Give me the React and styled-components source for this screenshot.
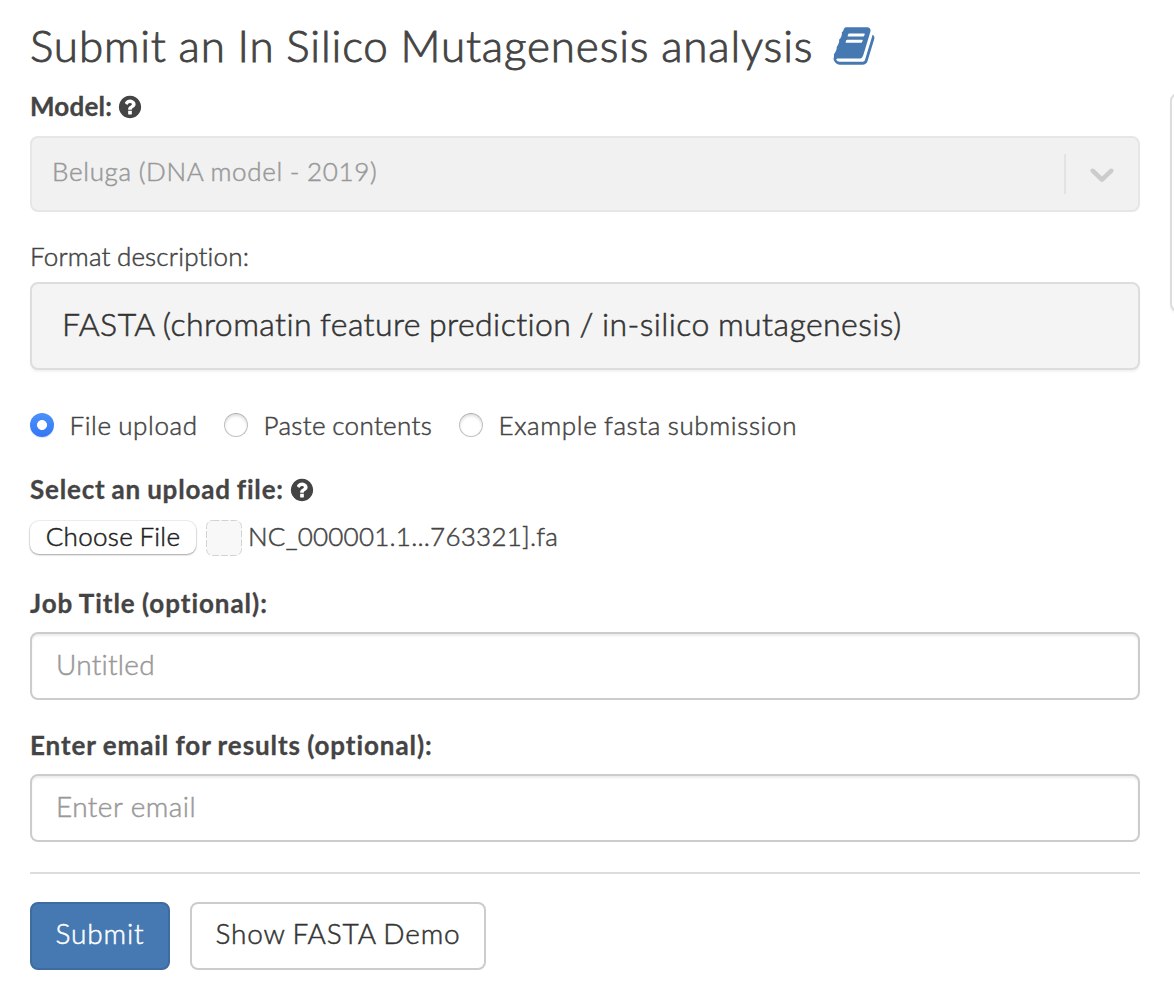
import React, { useState } from "react";
import styled, { createGlobalStyle, css } from "styled-components";

const GlobalStyle = createGlobalStyle`
  * { box-sizing: border-box; }
  body {
    margin: 0;
    background: #fff;
    color: #444;
    font-family: Lato, "Open Sans", sans-serif;
    font-weight: 300;
    font-size: 26px;
    line-height: 37px;
    overflow: hidden;
  }
`;

const Page = styled.main`
  display: flex;
  align-items: flex-start;
  gap: 30px;
  width: 1174px;
  height: 1004px;
  padding: 19px 0 0 30px;
  overflow: hidden;
`;

const Form = styled.form`
  display: flex;
  flex-direction: column;
  flex: 0 0 1110px;
`;

const SidePanel = styled.aside`
  flex: 0 0 300px;
  height: 219px;
  margin-top: 74px;
  border: 2px solid #ddd;
  border-radius: 8px;
  box-shadow: 0 2px 2px rgba(0, 0, 0, 0.05);
`;

const Text = styled.span`
  letter-spacing: ${(p) => p.$spacing || 0}px;
  word-spacing: -1px;
  -webkit-text-stroke: ${(p) => (p.$stroke === undefined ? 0.5 : p.$stroke)}px currentColor;
  white-space: nowrap;
`;

const Heading = styled.h1`
  display: flex;
  align-items: center;
  gap: 13px;
  height: 54px;
  margin: 0 0 15px;
  font-size: 44px;
  font-weight: 300;
  line-height: 52px;
  ${Text} {
    margin-bottom: 2px;
  }
`;

const BookSvg = styled.svg`
  width: 44px;
  height: 44px;
  margin-left: 6px;
  fill: #4679b2;
`;

const Label = styled.label`
  display: flex;
  align-items: center;
  height: 37px;
  gap: 7px;
  margin: ${(p) => p.$top || 0}px 0 ${(p) => p.$bottom}px;
  font-weight: ${(p) => (p.$plain ? 300 : 700)};
`;

const HelpSvg = styled.svg`
  width: 26px;
  height: 26px;
  margin-left: -2px;
  fill: #444;
`;

const Select = styled.div`
  display: flex;
  align-items: center;
  height: 76px;
  padding: 0 0 6px 20px;
  border: 2px solid #e6e6e6;
  border-radius: 8px;
  background: #f1f1f1;
  color: #999;
`;

const SelectValue = styled.div`
  flex: 1;
`;

const Separator = styled.span`
  width: 2px;
  height: 40px;
  margin-top: 6px;
  background: #e3e3e3;
`;

const Chevron = styled.svg`
  width: 40px;
  height: 40px;
  margin: 5px 16px 0;
  fill: #ccc;
`;

const FormatBox = styled.section`
  display: flex;
  align-items: center;
  height: 88px;
  padding: 0 30px 6px;
  border: 2px solid #ddd;
  border-radius: 8px;
  background: #f4f4f4;
  box-shadow: 0 2px 2px rgba(0, 0, 0, 0.05);
  color: #333;
  font-size: 32px;
`;

const RadioRow = styled.div`
  display: flex;
  height: 37px;
  margin-top: 37px;
`;

const RadioLabel = styled.label`
  display: flex;
  align-items: center;
  width: ${(p) => p.$width}px;
  gap: 15.5px;
`;

const Radio = styled.input`
  appearance: none;
  flex: none;
  width: 24px;
  height: 24px;
  margin: 0 0 1px;
  border-radius: 50%;
  border: 1px solid #c0c0c0;
  border-top-color: #adadad;
  background: #fff;
  box-shadow: inset 0 2px 3px rgba(0, 0, 0, 0.13);
  &:checked {
    border: 0;
    background: radial-gradient(circle, #fff 0 4.6px, transparent 5.3px),
      linear-gradient(#4c92f8, #3377f6);
    box-shadow: 0 1px 1px rgba(50, 110, 220, 0.18);
  }
`;

const FileRow = styled.div`
  display: flex;
  align-items: center;
  height: 37px;
`;

const ChooseButton = styled.button`
  display: flex;
  align-items: center;
  justify-content: center;
  width: 166px;
  height: 33px;
  margin-top: 2px;
  padding: 0 0 2px;
  border: 0;
  border-radius: 9px;
  background: #fff;
  box-shadow: 0 0 0 1px rgba(0, 0, 0, 0.06), 0 1px 2px rgba(0, 0, 0, 0.32);
  color: #222;
  font: inherit;
  line-height: 31px;
`;

const FileThumb = styled.svg`
  width: 36px;
  height: 36px;
  margin: 3px 6px 0 10px;
  fill: #f8f8f8;
  stroke: #d2d2d2;
`;

const TextInput = styled.input`
  height: 68px;
  padding: 0 24px 5px;
  border: 2px solid #ccc;
  border-radius: 8px;
  background: #fff;
  box-shadow: inset 0 2px 2px rgba(0, 0, 0, 0.075);
  color: #444;
  font: inherit;
  font-size: 28px;
  letter-spacing: ${(p) => p.$spacing}px;
  outline: none;
  &::placeholder {
    color: #999;
    opacity: 1;
    -webkit-text-stroke: 0.5px #999;
  }
`;

const Divider = styled.hr`
  width: 100%;
  height: 2px;
  margin: 30px 0 28px;
  border: 0;
  background: #ddd;
`;

const Actions = styled.div`
  display: flex;
  gap: 20px;
`;

const Button = styled.button`
  width: ${(p) => p.$width}px;
  height: 68px;
  padding: 0 0 6px;
  border: 2px solid #ccc;
  border-radius: 8px;
  background: #fff;
  color: #333;
  font: inherit;
  font-size: 28px;
  ${(p) =>
    p.$primary &&
    css`
      border-color: #3f6ca0;
      background: #4679b2;
      color: #fff;
    `}
`;

const BookIcon = () => (
  <BookSvg viewBox="0 0 1792 1792">
    <path d="M1703 478q40 57 18 129l-275 906q-19 64-76.5 107.5t-122.5 43.5h-923q-77 0-148.5-53.5t-99.5-131.5q-24-67-2-127 0-4 3-27t4-37q1-8-3-21.5t-3-19.5q2-11 8-21t16.5-23.5 16.5-23.5q23-38 45-91.5t30-91.5q3-10 .5-30t-.5-28q3-11 17-28t17-23q21-36 42-92t25-90q1-9-2.5-32t.5-28q4-13 22-30.5t22-22.5q19-26 42.5-84.5t27.5-96.5q1-8-3-25.5t-2-26.5q2-8 9-18t18-23 17-21q8-12 16.5-30.5t15-35 16-36 19.5-32 26.5-23.5 36-11.5 47.5 5.5l-1 3q38-9 51-9h761q74 0 114 56t18 130l-274 906q-36 119-71.5 153.5t-128.5 34.5h-869q-27 0-38 15-11 16-1 43 24 70 144 70h923q29 0 56-15.5t35-41.5l300-987q7-22 5-57 38 15 59 43zm-1064 2q-4 13 2 22.5t20 9.5h608q13 0 25.5-9.5t16.5-22.5l21-64q4-13-2-22.5t-20-9.5h-608q-13 0-25.5 9.5t-16.5 22.5zm-83 256q-4 13 2 22.5t20 9.5h608q13 0 25.5-9.5t16.5-22.5l21-64q4-13-2-22.5t-20-9.5h-608q-13 0-25.5 9.5t-16.5 22.5z" />
  </BookSvg>
);

const HelpIcon = () => (
  <HelpSvg viewBox="0 0 1792 1792">
    <path d="M1024 1376v-192q0-14-9-23t-23-9h-192q-14 0-23 9t-9 23v192q0 14 9 23t23 9h192q14 0 23-9t9-23zm256-672q0-88-55.5-163t-138.5-116-170-41q-243 0-371 213-15 24 8 42l132 100q7 6 19 6 16 0 25-12 53-68 86-92 34-24 86-24 48 0 85.5 26t37.5 59q0 38-20 61t-68 45q-63 28-115.5 86.5t-52.5 125.5v36q0 14 9 23t23 9h192q14 0 23-9t9-23q0-19 21.5-49.5t54.5-49.5q32-18 49-28.5t46-35 44.5-48 28-60.5 12.5-81zm384 192q0 209-103 385.5t-279.5 279.5-385.5 103-385.5-103-279.5-279.5-103-385.5 103-385.5 279.5-279.5 385.5-103 385.5 103 279.5 279.5 103 385.5z" />
  </HelpSvg>
);

const SOURCES = [
  { id: "file", label: "File upload", width: 194, spacing: 0.6 },
  { id: "paste", label: "Paste contents", width: 235, spacing: 0.34 },
  { id: "example", label: "Example fasta submission", width: 360, spacing: 0.63 },
];

export default function App() {
  const [source, setSource] = useState("file");
  return (
    <>
      <GlobalStyle />
      <Page>
        <Form onSubmit={(e) => e.preventDefault()}>
          <Heading>
            <Text $spacing={0.84} $stroke={0.9}>Submit an In Silico Mutagenesis analysis</Text>
            <BookIcon />
          </Heading>

          <Label $bottom={11}>
            <Text $spacing={0.2} $stroke={0.3}>Model:</Text>
            <HelpIcon />
          </Label>
          <Select>
            <SelectValue>
              <Text $spacing={0.7}>Beluga (DNA model - 2019)</Text>
            </SelectValue>
            <Separator />
            <Chevron viewBox="0 0 20 20">
              <path d="M4.516 7.548c0.436-0.446 1.043-0.481 1.576 0l3.908 3.747 3.908-3.747c0.533-0.481 1.141-0.446 1.574 0 0.436 0.445 0.408 1.197 0 1.615-0.406 0.418-4.695 4.502-4.695 4.502-0.217 0.223-0.502 0.335-0.787 0.335s-0.57-0.112-0.789-0.335c0 0-4.287-4.084-4.695-4.502s-0.436-1.17 0-1.615z" />
            </Chevron>
          </Select>

          <Label $plain $top={26} $bottom={7}>
            <Text $spacing={0.18}>Format description:</Text>
          </Label>
          <FormatBox>
            <Text $spacing={0.42} $stroke={0.55}>FASTA (chromatin feature prediction / in-silico mutagenesis)</Text>
          </FormatBox>

          <RadioRow>
            {SOURCES.map((s) => (
              <RadioLabel key={s.id} $width={s.width}>
                <Radio
                  type="radio"
                  name="source"
                  checked={source === s.id}
                  onChange={() => setSource(s.id)}
                />
                <Text $spacing={s.spacing}>{s.label}</Text>
              </RadioLabel>
            ))}
          </RadioRow>

          <Label $top={27} $bottom={10}>
            <Text $spacing={0.8} $stroke={0.3}>Select an upload file:</Text>
            <HelpIcon />
          </Label>
          <FileRow>
            <ChooseButton type="button">
              <Text $spacing={0.3}>Choose File</Text>
            </ChooseButton>
            <FileThumb viewBox="0 0 36 36">
              <rect x="0.5" y="0.5" width="35" height="35" rx="6" strokeDasharray="7 2" />
            </FileThumb>
            <Text $spacing={0.24}>NC_000001.1...763321].fa</Text>
          </FileRow>

          <Label $top={30} $bottom={10}>
            <Text $spacing={0.96} $stroke={0.3}>Job Title (optional):</Text>
          </Label>
          <TextInput placeholder="Untitled" $spacing={0.25} />

          <Label $top={27} $bottom={10}>
            <Text $spacing={0.93} $stroke={0.3}>Enter email for results (optional):</Text>
          </Label>
          <TextInput placeholder="Enter email" $spacing={0.45} />

          <Divider />
          <Actions>
            <Button type="submit" $primary $width={140}>
              <Text $spacing={0.85}>Submit</Text>
            </Button>
            <Button type="button" $width={296}>
              <Text $spacing={0.82}>Show FASTA Demo</Text>
            </Button>
          </Actions>
        </Form>
        <SidePanel />
      </Page>
    </>
  );
}
